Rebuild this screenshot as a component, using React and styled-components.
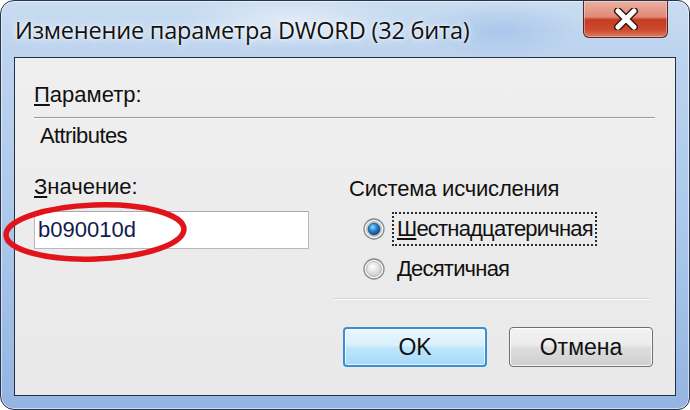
import React from "react";
import styled, { createGlobalStyle } from "styled-components";

const Global = createGlobalStyle`
  html, body { margin: 0; padding: 0; background: #ffffff; }
  body { width: 690px; height: 410px; overflow: hidden; }
  * { box-sizing: border-box; }
`;

const Window = styled.div`
  position: relative;
  width: 690px;
  height: 410px;
  border: 1px solid #28344a;
  border-radius: 14px 12px 12px 14px;
  background:
    radial-gradient(ellipse 120px 40px at 500px 30px, rgba(150,185,230,0.55), transparent 70%),
    radial-gradient(ellipse 160px 40px at 290px 20px, rgba(255,255,255,0.45), transparent 70%),
    linear-gradient(180deg, #c9dcf1 0%, #bcd3ee 14%, #a9c6ea 60%, #93b4e2 100%);
  box-shadow: inset 0 0 0 1px rgba(255,255,255,0.55);
  display: flex;
  flex-direction: column;
  padding: 0 13px 13px 13px;
  font-family: "Liberation Sans", Arial, sans-serif;
`;

const TitleBar = styled.div`
  height: 56px;
  display: flex;
  align-items: flex-start;
  justify-content: space-between;
`;

const Title = styled.div`
  font-family: "Open Sans", "Noto Sans", sans-serif;
  font-size: 23.5px;
  letter-spacing: -0.2px;
  color: #111;
  padding-top: 13px;
  padding-left: 1px;
  text-shadow: 0 0 8px rgba(255,255,255,0.9), 0 0 3px rgba(255,255,255,0.9);
`;

const CloseButton = styled.div`
  width: 85px;
  height: 37px;
  margin-right: 8px;
  border: 1px solid #4b2a2a;
  border-top: none;
  border-radius: 0 0 6px 6px;
  background: linear-gradient(180deg, #ebb0a2 0%, #df8a77 44%, #c63b22 52%, #cc4a2f 80%, #de7a62 100%);
  box-shadow: inset 0 0 0 1px rgba(255,255,255,0.35);
  display: flex;
  align-items: center;
  justify-content: center;
`;

const Client = styled.div`
  flex: 1;
  background: linear-gradient(180deg, #efefef 0%, #ebebeb 60%, #e9e9e9 100%);
  border: 1px solid #243042;
  padding: 0 20px 0 19px;
  display: flex;
  flex-direction: column;
  position: relative;
`;

const Label = styled.div`
  font-size: 22px;
  line-height: 26px;
  color: #111;
  margin-top: ${(p) => p.$top || 0}px;
  padding-left: ${(p) => p.$indent || 0}px;
  letter-spacing: ${(p) => p.$ls || 0}px;
  white-space: nowrap;
`;

const Key = styled.span`
  text-decoration: underline;
  text-underline-offset: 2px;
`;

const Rule = styled.div`
  height: 2px;
  border-top: 1px solid ${(p) => p.$color || "#9a9a9a"};
  border-bottom: 1px solid #fafafa;
  margin-top: ${(p) => p.$top || 0}px;
  margin-left: ${(p) => p.$left || 0}px;
  margin-right: ${(p) => p.$right || 0}px;
`;

const Columns = styled.div`
  display: grid;
  grid-template-columns: 275px 1fr;
  column-gap: 40px;
  margin-top: 25px;
`;

const Column = styled.div`
  display: flex;
  flex-direction: column;
`;

const Input = styled.div`
  margin-top: 11px;
  height: 38px;
  width: 275px;
  background: #fff;
  border: 1px solid #b5b8c0;
  border-top-color: #a6a9b0;
  display: flex;
  align-items: center;
  padding-left: 3px;
  font-size: 22px;
  color: #101c4e;
`;

const Radios = styled.div`
  display: flex;
  flex-direction: column;
  gap: 6px;
  margin-top: 10px;
  padding-left: 14px;
`;

const RadioRow = styled.div`
  display: flex;
  align-items: center;
  height: 34px;
  gap: 7px;
`;

const RadioLabel = styled.span`
  font-size: 22px;
  line-height: 26px;
  color: #111;
  padding: 2px 2px 2px 3px;
  border: 2px ${(p) => (p.$focus ? "dotted #2a2a2a" : "solid transparent")};
  letter-spacing: -0.8px;
`;

const Buttons = styled.div`
  display: flex;
  justify-content: flex-end;
  gap: 22px;
  margin-top: 27px;
  padding-right: 2px;
`;

const Button = styled.div`
  width: 144px;
  height: 40px;
  border-radius: 4px;
  display: flex;
  align-items: center;
  justify-content: center;
  font-size: 23px;
  color: #111;
  border: ${(p) => (p.$primary ? "2px solid #3b8fd3" : "1.5px solid #6f6f6f")};
  background: ${(p) =>
    p.$primary
      ? "linear-gradient(180deg, #eaf6fd 0%, #d9f0fc 45%, #bee6fd 52%, #a7d9f5 100%)"
      : "linear-gradient(180deg, #f3f3f3 0%, #ebebeb 45%, #dddddd 52%, #cfcfcf 100%)"};
  box-shadow: inset 0 0 0 1px ${(p) => (p.$primary ? "rgba(255,255,255,0.7)" : "rgba(255,255,255,0.8)")};
`;

const Ellipse = styled.svg`
  position: absolute;
  left: -16px;
  top: 142px;
  pointer-events: none;
`;

function Radio({ checked }) {
  return (
    <svg width="22" height="22" viewBox="0 0 22 22">
      <defs>
        <radialGradient id="rbg" cx="40%" cy="35%" r="70%">
          <stop offset="0%" stopColor="#ffffff" />
          <stop offset="100%" stopColor="#c9c9c9" />
        </radialGradient>
        <radialGradient id="dot" cx="40%" cy="35%" r="70%">
          <stop offset="0%" stopColor="#9fd6ff" />
          <stop offset="45%" stopColor="#2a86d0" />
          <stop offset="100%" stopColor="#0c3f7a" />
        </radialGradient>
      </defs>
      <circle cx="11" cy="11" r="10" fill="#f4f4f4" stroke="#8a8a8a" strokeWidth="1.3" />
      <circle cx="11" cy="11" r="7.5" fill="url(#rbg)" stroke="#b0b0b0" strokeWidth="0.8" />
      {checked && <circle cx="11" cy="11" r="6" fill="url(#dot)" stroke="#1d4f86" strokeWidth="0.8" />}
    </svg>
  );
}

export default function App() {
  return (
    <>
      <Global />
      <Window>
        <TitleBar>
          <Title>Изменение параметра DWORD (32 бита)</Title>
          <CloseButton>
            <svg width="26" height="22" viewBox="0 0 26 22">
              <path d="M5 3 L21 19 M21 3 L5 19" stroke="#3b1a14" strokeWidth="8" strokeLinecap="round" />
              <path d="M5 3 L21 19 M21 3 L5 19" stroke="#ffffff" strokeWidth="5" strokeLinecap="round" />
            </svg>
          </CloseButton>
        </TitleBar>
        <Client>
          <Label $top={24}>
            <Key>П</Key>араметр:
          </Label>
          <Rule $top={9} />
          <Label $top={4} $indent={6} $ls={-0.6}>
            Attributes
          </Label>
          <Columns>
            <Column>
              <Label>
                <Key>З</Key>начение:
              </Label>
              <Input>b090010d</Input>
            </Column>
            <Column>
              <Label $top={2} $ls={-0.2}>Система исчисления</Label>
              <Radios>
                <RadioRow>
                  <Radio checked />
                  <RadioLabel $focus>
                    <Key>Ш</Key>естнадцатеричная
                  </RadioLabel>
                </RadioRow>
                <RadioRow>
                  <Radio />
                  <RadioLabel>
                    <Key>Д</Key>есятичная
                  </RadioLabel>
                </RadioRow>
              </Radios>
            </Column>
          </Columns>
          <Rule $top={12} $left={299} $right={5} $color="#d6d6d6" />
          <Buttons>
            <Button $primary>OK</Button>
            <Button>Отмена</Button>
          </Buttons>
          <Ellipse width="194" height="66" viewBox="0 0 194 66">
            <ellipse cx="96" cy="32" rx="89" ry="27" fill="none" stroke="#e2141b" strokeWidth="5.5" transform="rotate(-2 96 32)" />
          </Ellipse>
        </Client>
      </Window>
    </>
  );
}
